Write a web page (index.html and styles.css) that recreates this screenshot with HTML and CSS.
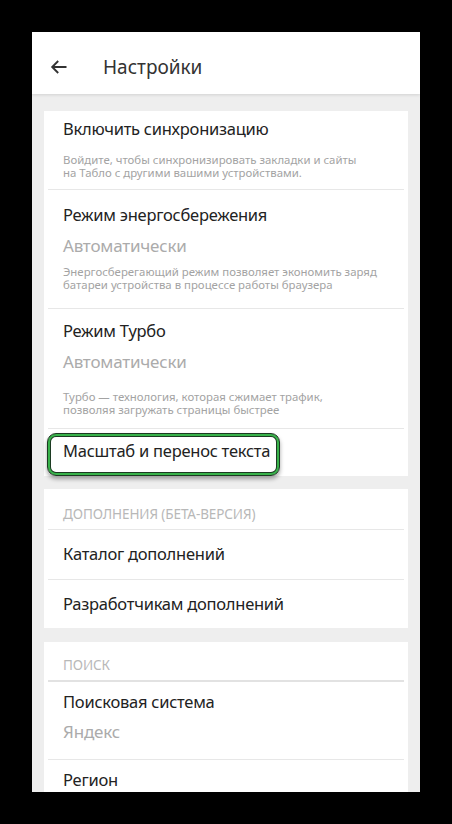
FILE: index.html
```html
<!DOCTYPE html>
<html lang="ru">
<head>
<meta charset="utf-8">
<title>Настройки</title>
<link rel="stylesheet" href="styles.css">
</head>
<body>
<div class="screen">
  <header class="topbar">
    <svg class="back" viewBox="0 0 17 14" width="17" height="14" aria-hidden="true">
      <path d="M16.5 7H2.2M8.2 1L2.2 7l6 6" fill="none" stroke="#333" stroke-width="1.9"/>
    </svg>
    <h1 class="topbar-title">Настройки</h1>
  </header>

  <main class="content">
    <section class="card card-first">
      <div class="item item-sync">
        <div class="title">Включить синхронизацию</div>
        <div class="desc desc-sync">Войдите, чтобы синхронизировать закладки и сайты<br>на Табло с другими вашими устройствами.</div>
      </div>
      <div class="divider"></div>
      <div class="item item-energy">
        <div class="title">Режим энергосбережения</div>
        <div class="value">Автоматически</div>
        <div class="desc desc-energy">Энергосберегающий режим позволяет экономить заряд<br>батареи устройства в процессе работы браузера</div>
      </div>
      <div class="divider"></div>
      <div class="item item-turbo">
        <div class="title">Режим Турбо</div>
        <div class="value">Автоматически</div>
        <div class="desc desc-turbo">Турбо — технология, которая сжимает трафик,<br>позволяя загружать страницы быстрее</div>
      </div>
      <div class="divider"></div>
      <div class="item item-scale">
        <div class="title highlight">Масштаб и перенос текста</div>
      </div>
    </section>

    <section class="card card-addons">
      <div class="section-head head-addons">ДОПОЛНЕНИЯ (БЕТА-ВЕРСИЯ)</div>
      <div class="divider"></div>
      <div class="item item-simple">
        <div class="title">Каталог дополнений</div>
      </div>
      <div class="divider"></div>
      <div class="item item-simple item-last">
        <div class="title">Разработчикам дополнений</div>
      </div>
    </section>

    <section class="card card-search">
      <div class="section-head head-search">ПОИСК</div>
      <div class="divider divider-thick"></div>
      <div class="item item-engine">
        <div class="title">Поисковая система</div>
        <div class="value value-engine">Яндекс</div>
      </div>
      <div class="divider"></div>
      <div class="item item-region">
        <div class="title">Регион</div>
      </div>
    </section>
  </main>
</div>
</body>
</html>
```

FILE: styles.css
```css
html, body {
  margin: 0;
  padding: 0;
}

body {
  background: #000;
  height: 824px;
  overflow: hidden;
  font-family: "Noto Sans", "Open Sans", "DejaVu Sans", sans-serif;
}

.screen {
  margin: 32px 0 0 32px;
  width: 388px;
  height: 760px;
  overflow: hidden;
  background: #eeeeee;
}

.topbar {
  position: relative;
  z-index: 1;
  height: 62px;
  box-sizing: border-box;
  padding-top: 7px;
  display: flex;
  align-items: center;
  background: #fff;
  box-shadow: 0 1px 3px rgba(0, 0, 0, 0.12);
}

.back {
  display: block;
  margin-left: 18px;
  flex: none;
}

.topbar-title {
  margin: 0 0 0 36px;
  font-size: 19px;
  line-height: 22px;
  font-weight: 400;
  color: #333;
}

.content {
  padding-top: 17px;
}

.card {
  background: #fff;
  margin: 0 12px;
}

.card-addons {
  margin-top: 13px;
}

.card-search {
  margin-top: 14px;
}

.divider {
  height: 1px;
  margin: 0 4px;
  background: #e7e7e7;
}

.divider-thick {
  height: 2px;
  background: #e2e2e2;
}

.item {
  padding: 0 19px;
}

.title {
  font-size: 16.5px;
  letter-spacing: -0.25px;
  line-height: 20px;
  color: #222;
}

.value {
  margin-top: 11px;
  font-size: 17px;
  letter-spacing: -0.2px;
  line-height: 20px;
  color: #ababab;
}

.desc {
  font-size: 11.4px;
  line-height: 13px;
  color: #a3a3a3;
  white-space: nowrap;
}

.section-head {
  padding: 17px 19px 7px;
  font-size: 13.5px;
  letter-spacing: -0.1px;
  line-height: 16px;
  color: #b8b8b8;
}

.head-search {
  padding-top: 15px;
  padding-bottom: 7px;
}

.item-sync {
  padding-top: 8px;
  padding-bottom: 10px;
}

.desc-sync {
  margin-top: 14px;
}

.item-energy {
  padding-top: 15px;
  padding-bottom: 17px;
}

.desc-energy {
  margin-top: 9px;
}

.item-turbo {
  padding-top: 12px;
  padding-bottom: 12px;
}

.desc-turbo {
  margin-top: 18px;
}

.item-scale {
  padding-top: 12px;
  padding-bottom: 15px;
}

.highlight {
  position: relative;
}

.highlight::before {
  content: "";
  position: absolute;
  left: -16px;
  top: -8px;
  width: 233px;
  height: 43px;
  box-sizing: border-box;
  border: 1px solid #1c3a22;
  border-radius: 9px;
  box-shadow:
    inset 0 0 0 2px #38b24a,
    inset 0 0 0 3px #1c3a22,
    0 3px 4px rgba(0, 0, 0, 0.35);
  pointer-events: none;
}

.item-simple {
  padding-top: 14px;
  padding-bottom: 15px;
}

.item-last {
  padding-bottom: 14px;
}

.item-engine {
  padding-top: 10px;
  padding-bottom: 17px;
}

.value-engine {
  margin-top: 10px;
}

.item-region {
  padding-top: 10px;
  padding-bottom: 14px;
}
```
